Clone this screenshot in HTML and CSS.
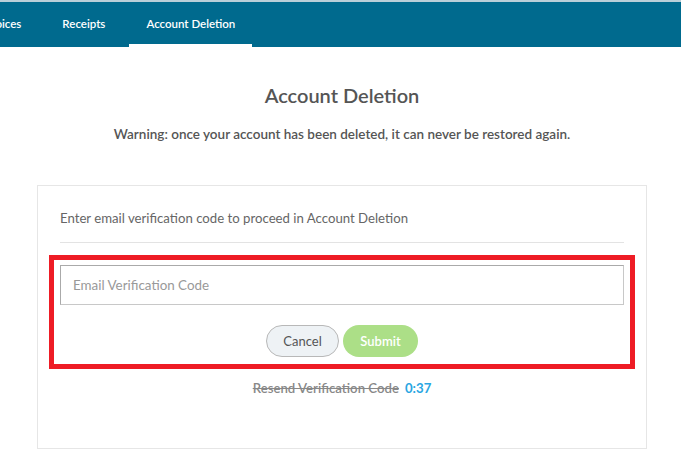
FILE: index.html
```html
<!DOCTYPE html>
<html lang="en">
<head>
<meta charset="utf-8">
<title>Account Deletion</title>
<link rel="stylesheet" href="styles.css">
</head>
<body>
<nav class="topbar">
  <ul class="tabs">
    <li class="tab">Invoices</li>
    <li class="tab">Receipts</li>
    <li class="tab active">Account Deletion</li>
  </ul>
</nav>
<main class="page">
  <h1 class="title">Account Deletion</h1>
  <p class="warning">Warning: once your account has been deleted, it can never be restored again.</p>
  <section class="card">
    <p class="card-head">Enter email verification code to proceed in Account Deletion</p>
    <div class="divider"></div>
    <div class="highlight">
      <input class="code-input" type="text" placeholder="Email Verification Code">
      <div class="actions">
        <button class="btn btn-cancel">Cancel</button>
        <button class="btn btn-submit">Submit</button>
      </div>
    </div>
    <p class="resend"><span class="resend-link">Resend Verification Code</span><span class="timer">0:37</span></p>
  </section>
</main>
</body>
</html>
```
FILE: styles.css
```css
html, body {
  margin: 0;
  padding: 0;
  background: #ffffff;
  font-family: "Source Sans Pro", Lato, "Open Sans", sans-serif;
}
.topbar {
  background: #006a8e;
  border-top: 2px solid #b9cfd9;
  height: 45px;
  overflow: hidden;
}
.tabs {
  list-style: none;
  margin: 0 0 0 -37px;
  padding: 0;
  display: flex;
  height: 45px;
  gap: 7px;
}
.tab {
  color: #ffffff;
  font-size: 11.5px;
  font-weight: 600;
  padding: 0 17px;
  line-height: 43px;
  box-sizing: border-box;
  height: 45px;
}
.tab.active {
  border-bottom: 3px solid #ffffff;
}
.page {
  padding: 0 34px 0 37px;
}
.title {
  margin: 36px 0 0;
  text-align: center;
  font-size: 20px;
  font-weight: 600;
  color: #555555;
  line-height: 24px;
}
.warning {
  margin: 18px 0 0;
  text-align: center;
  font-size: 13.5px;
  font-weight: 600;
  color: #555555;
  line-height: 18px;
}
.card {
  margin-top: 42px;
  border: 1px solid #e6e6e6;
  padding: 22px 22px 0;
  height: 240px;
}
.card-head {
  margin: 0;
  font-size: 13.2px;
  color: #666666;
  line-height: 20px;
}
.divider {
  margin-top: 14px;
  height: 1px;
  background: #e3e3e3;
}
.highlight {
  margin: 12px -11px 0;
  border: 5px solid #ee1c25;
  padding: 5px 6px 7px;
}
.code-input {
  display: block;
  width: 100%;
  box-sizing: border-box;
  height: 40px;
  border: 1px solid #aaaaaa;
  border-right-color: #c8c8c8;
  border-bottom-color: #c8c8c8;
  padding: 0 12px;
  font-family: inherit;
  font-size: 13.4px;
  color: #555;
  outline: none;
}
.code-input::placeholder {
  color: #999999;
}
.actions {
  display: flex;
  justify-content: center;
  gap: 4px;
  margin-top: 20px;
}
.btn {
  height: 32px;
  border-radius: 16px;
  font-family: inherit;
  font-size: 13px;
  padding: 0;
}
.btn-cancel {
  width: 73px;
  background: #eef2f5;
  border: 1px solid #b8b8b8;
  color: #555555;
}
.btn-submit {
  width: 75px;
  background: #acdf87;
  border: none;
  color: #ffffff;
  font-weight: 600;
}
.resend {
  margin: 9px 0 0;
  text-align: center;
  font-size: 13.2px;
  line-height: 20px;
}
.resend-link {
  color: #888888;
  font-weight: 600;
  text-decoration: line-through;
}
.timer {
  color: #29a6e2;
  font-weight: 700;
  margin-left: 6px;
}
```
